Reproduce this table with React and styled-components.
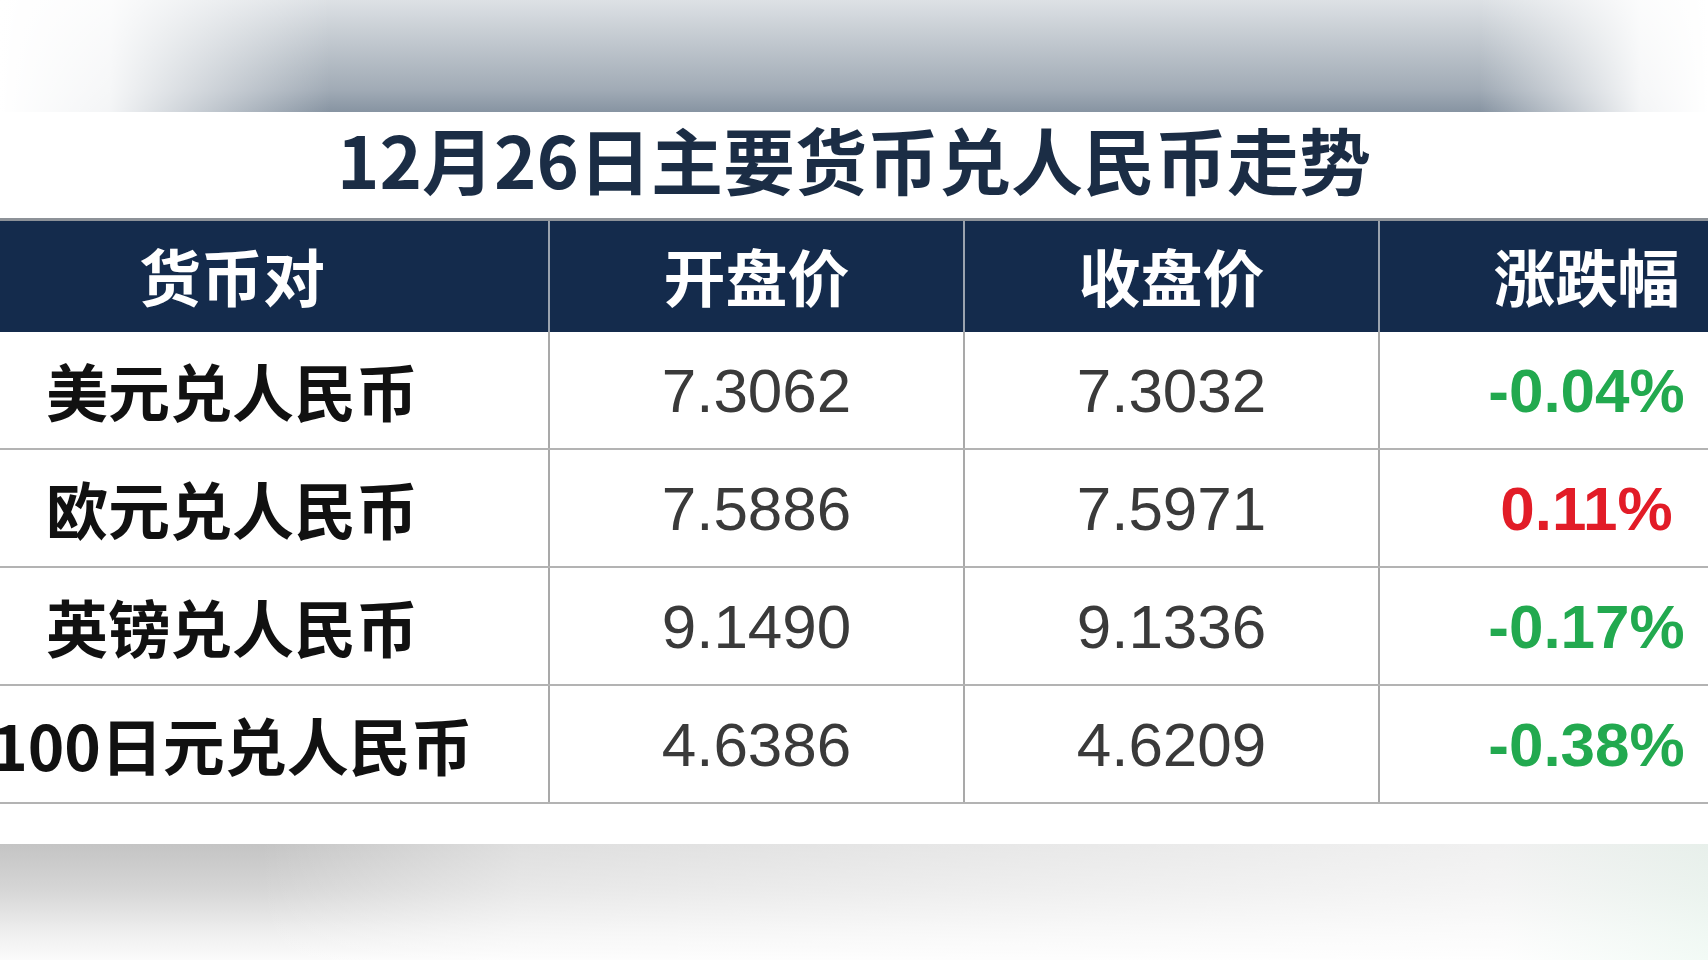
import React from "react";
import styled, { createGlobalStyle } from "styled-components";

const rows = [
  { pair: "美元兑人民币", open: "7.3062", close: "7.3032", change: "-0.04%" },
  { pair: "欧元兑人民币", open: "7.5886", close: "7.5971", change: "0.11%" },
  { pair: "英镑兑人民币", open: "9.1490", close: "9.1336", change: "-0.17%" },
  { pair: "100日元兑人民币", open: "4.6386", close: "4.6209", change: "-0.38%" },
];

const heads = ["货币对", "开盘价", "收盘价", "涨跌幅"];

export default function App() {
  return (
    <Page>
      <GlobalStyle />
      <TopBand />
      <Sheet>
        <Title>12月26日主要货币兑人民币走势</Title>
        <Table>
          <HeadRow>
            {heads.map((h, i) => (
              <HeadCell key={h} first={i === 0}>
                {h}
              </HeadCell>
            ))}
          </HeadRow>
          {rows.map((r) => (
            <Row key={r.pair}>
              <PairCell>{r.pair}</PairCell>
              <NumCell>{r.open}</NumCell>
              <NumCell>{r.close}</NumCell>
              <ChangeCell up={!r.change.startsWith("-")}>{r.change}</ChangeCell>
            </Row>
          ))}
        </Table>
      </Sheet>
      <BottomBand />
    </Page>
  );
}

const GlobalStyle = createGlobalStyle`
  html, body {
    margin: 0;
    padding: 0;
    background: #fff;
    overflow: hidden;
  }
`;

const Page = styled.div`
  width: 1708px;
  height: 960px;
  display: flex;
  flex-direction: column;
  overflow: hidden;
  background: #fff;
`;

const TopBand = styled.div`
  height: 112px;
  flex-shrink: 0;
  background:
    linear-gradient(
      to right,
      #ffffff 0,
      rgba(255, 255, 255, 0.9) 110px,
      rgba(255, 255, 255, 0) 330px,
      rgba(255, 255, 255, 0) 1480px,
      rgba(255, 255, 255, 0.9) 1640px,
      #ffffff 100%
    ),
    linear-gradient(to bottom, #dde1e5 0%, #bfc6cd 40%, #a1abb6 80%, #8794a2 100%);
`;

const Sheet = styled.div`
  height: 732px;
  flex-shrink: 0;
  display: flex;
  flex-direction: column;
  background: #fff;
`;

const Title = styled.div`
  height: 106px;
  display: flex;
  align-items: center;
  justify-content: center;
  font-family: "Noto Sans CJK SC", "Liberation Sans", sans-serif;
  font-weight: 700;
  font-size: 72px;
  color: #1b2d45;
  padding-bottom: 16px;
  box-sizing: border-box;
`;

const Table = styled.div`
  margin-left: -84px;
  width: 1877px;
  display: flex;
  flex-direction: column;
`;

const cols = "632px 415px 415px 415px";

const HeadRow = styled.div`
  display: grid;
  grid-template-columns: ${cols};
  height: 114px;
  background: #142b4c;
  border-top: 3px solid #8d9298;
  box-sizing: border-box;
`;

const HeadCell = styled.div`
  display: flex;
  align-items: center;
  justify-content: center;
  font-family: "Noto Sans CJK SC", sans-serif;
  font-weight: 700;
  font-size: 62px;
  color: #ffffff;
  border-left: ${(p) => (p.first ? "none" : "2px solid #9aa3ae")};
  padding-bottom: 4px;
`;

const Row = styled.div`
  display: grid;
  grid-template-columns: ${cols};
  height: 118px;
  border-bottom: 2px solid #b3b3b3;
  box-sizing: border-box;
`;

const Cell = styled.div`
  display: flex;
  align-items: center;
  justify-content: center;
  border-left: 2px solid #a9a9a9;
  white-space: nowrap;
`;

const PairCell = styled(Cell)`
  border-left: none;
  font-family: "Noto Sans CJK SC", sans-serif;
  font-weight: 700;
  font-size: 62px;
  color: #111;
`;

const NumCell = styled(Cell)`
  font-family: "Liberation Sans", Arial, sans-serif;
  font-size: 62px;
  color: #3a3a3a;
`;

const ChangeCell = styled(Cell)`
  font-family: "Liberation Sans", Arial, sans-serif;
  font-weight: 700;
  font-size: 62px;
  color: ${(p) => (p.up ? "#e21c27" : "#22a94f")};
`;

const BottomBand = styled.div`
  flex: 1;
  background:
    linear-gradient(
      to right,
      rgba(255, 255, 255, 0) 0,
      rgba(255, 255, 255, 0) 260px,
      rgba(255, 255, 255, 0.45) 520px,
      rgba(255, 255, 255, 0.6) 1000px,
      rgba(255, 255, 255, 0.75) 1500px,
      rgba(240, 250, 244, 0.8) 100%
    ),
    linear-gradient(to bottom, #c4c4c4 0%, #d6d6d6 40%, #eeeeee 75%, #fbfbfb 100%);
`;
